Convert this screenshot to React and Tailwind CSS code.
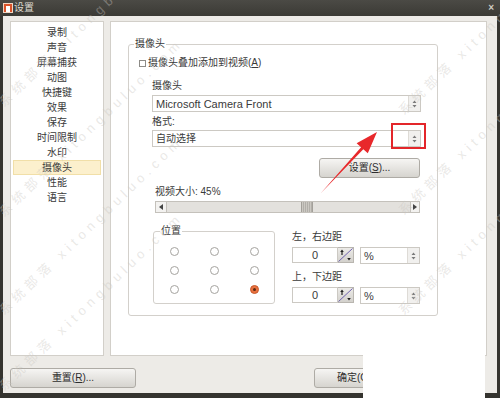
import React from 'react';

const menu = ['录制', '声音', '屏幕捕获', '动图', '快捷键', '效果', '保存', '时间限制', '水印', '摄像头', '性能', '语言'];

function UpDown() {
  return (
    <svg width="5" height="8" viewBox="0 0 5 8">
      <path d="M2.5 0.5L4.5 3H0.5Z M2.5 7.5L4.5 5H0.5Z" fill="#7a7a7a" />
    </svg>
  );
}

function Combo({ text, className }) {
  return (
    <div className={`h-[17px] flex items-stretch border border-[#ccc9c3] bg-white ${className}`}>
      <div className="flex-1 pl-[3px] flex items-center truncate">{text}</div>
      <div className="w-[12px] border-l border-[#dedbd6] bg-[#f1f0ee] flex items-center justify-center">
        <UpDown />
      </div>
    </div>
  );
}

function SpinBox() {
  return (
    <div className="flex h-[16px]">
      <div className="w-[46px] border border-[#ccc9c3] bg-white flex items-center justify-center text-[11px]">0</div>
      <div className="w-[16px] border border-l-0 border-[#b9b6b0] bg-gradient-to-b from-[#ecebe8] to-[#d3d1cc]">
        <svg width="15" height="14" viewBox="0 0 15 14">
          <path d="M0.5 13.5L14.5 0.5" stroke="#7064b0" strokeWidth="1" />
          <path d="M4 1.5L5.8 4H4.6V7H3.4V4H2.2Z" fill="#222" />
          <path d="M11 12.5L12.8 10H9.2Z" fill="#222" />
        </svg>
      </div>
    </div>
  );
}

function Radio({ on }) {
  return on ? (
    <div className="w-[9px] h-[9px] rounded-full bg-[#e9713f] border border-[#c85a2c] flex items-center justify-center">
      <div className="w-[3px] h-[3px] rounded-full bg-[#5a2a14]" />
    </div>
  ) : (
    <div className="w-[9px] h-[9px] rounded-full border border-[#a5a39f] bg-white" />
  );
}

function Button({ children, className }) {
  return (
    <div className={`h-[20px] rounded-[3px] border border-[#aeaba5] bg-gradient-to-b from-[#f6f5f3] to-[#d6d4cf] flex items-center text-[#2e2e2e] ${className}`}>
      {children}
    </div>
  );
}

function Watermark({ className }) {
  return (
    <div className={`absolute origin-bottom-left -rotate-[44deg] whitespace-nowrap text-[13px] tracking-[5px] text-[#c9c6c0]/40 ${className}`}>
      系统部落 xitongbuluo.com
    </div>
  );
}

export default function App() {
  return (
    <div className="relative w-[500px] h-[398px] overflow-hidden bg-[#35342f] text-[10px] leading-[14px] text-[#3a3a3a] font-['Liberation_Sans','Noto_Sans_CJK_SC',sans-serif]">
      {/* title bar */}
      <div className="h-[16px] flex items-center bg-gradient-to-b from-[#4b4a45] to-[#3b3a35] text-[#dedad1]">
        <div className="ml-[3px] w-[10px] h-[10px] bg-[#d9532a] border border-[#f3d6c2] flex items-end justify-center">
          <div className="w-[4px] h-[6px] bg-white" />
        </div>
        <span className="ml-[1px] text-[10px]">设置</span>
        <div className="flex-1" />
        <span className="mr-[6px] text-[10px] font-bold text-[#cfcbc2]">×</span>
      </div>

      {/* body */}
      <div className="mx-[3px] h-[377px] bg-[#edebe7] flex flex-col">
        <div className="flex mt-[5px] h-[335px] pl-[7px] pr-[10px] gap-[6px]">
          {/* left list */}
          <div className="w-[94px] bg-white border border-[#d2cfc9] pt-[3px] px-[2px]">
            {menu.map((m) => (
              <div
                key={m}
                className={`h-[15px] flex items-center justify-center ${m === '摄像头' ? 'bg-[#fcf0cd] border border-[#f1dfa8]' : ''}`}
              >
                {m}
              </div>
            ))}
          </div>

          {/* right panel */}
          <div className="flex-1 bg-white border border-[#d2cfc9] pt-[22px] pl-[17px]">
            <div className="relative w-[310px] h-[272px] border border-[#d3d0cb] rounded-[3px] pt-[11px] pl-[10px]">
              <div className="absolute -top-[8px] left-[5px] bg-white px-[1px]">摄像头</div>

              <div className="h-[14px] flex items-center">
                <div className="w-[7px] h-[7px] border border-[#8d8b87] bg-white" />
                <span className="ml-[2px]">
                  摄像头叠加添加到视频(<span className="underline">A</span>)
                </span>
              </div>

              <div className="ml-[13px] w-[269px]">
                <div className="mt-[9px] h-[14px]">摄像头</div>
                <Combo className="mt-[2px] text-[11px]" text="Microsoft Camera Front" />
                <div className="mt-[3px] h-[14px]">格式:</div>
                <Combo className="mt-[1px]" text="自动选择" />

                <div className="mt-[11px] flex justify-end pr-[1px]">
                  <Button className="w-[101px] h-[19px] justify-center">
                    设置(<span className="underline">S</span>)...
                  </Button>
                </div>

                <div className="mt-[7px] h-[14px] pl-[3px]">视频大小: 45%</div>
                <div className="mt-[2px] ml-[3px] mr-[1px] h-[12px] flex border border-[#c4c1bb] bg-[#e3e1dd]">
                  <div className="w-[11px] border-r border-[#c4c1bb] bg-[#f3f2f0] flex items-center justify-center">
                    <svg width="4" height="6" viewBox="0 0 4 6"><path d="M0 3L4 0V6Z" fill="#444" /></svg>
                  </div>
                  <div className="flex-1 relative">
                    <div className="absolute left-[134px] top-0 bottom-0 w-[12px] border-x border-[#a3a09a] bg-[repeating-linear-gradient(90deg,#cbc8c2_0px,#cbc8c2_1px,#b2afa9_1px,#b2afa9_2px)]" />
                  </div>
                  <div className="w-[9px] border-l border-[#c4c1bb] bg-[#f3f2f0] flex items-center justify-center">
                    <svg width="4" height="6" viewBox="0 0 4 6"><path d="M4 3L0 0V6Z" fill="#444" /></svg>
                  </div>
                </div>

                <div className="mt-[18px] flex">
                  <div className="relative ml-[1px] w-[122px] h-[73px] border border-[#d3d0cb] rounded-[3px] pt-[10px]">
                    <div className="absolute -top-[8px] left-[6px] bg-white px-[1px]">位置</div>
                    <div className="grid grid-cols-3 w-[120px]">
                      {[0, 1, 2, 3, 4, 5, 6, 7, 8].map((i) => (
                        <div key={i} className="h-[19px] flex items-center justify-center">
                          <Radio on={i === 8} />
                        </div>
                      ))}
                    </div>
                  </div>

                  <div className="ml-[17px] w-[128px] -mt-[1px]">
                    <div className="h-[14px]">左，右边距</div>
                    <div className="mt-[3px] flex">
                      <SpinBox />
                      <Combo className="ml-[6px] w-[60px] h-[16px] text-[11px]" text="%" />
                    </div>
                    <div className="mt-[6px] h-[14px]">上，下边距</div>
                    <div className="mt-[3px] flex">
                      <SpinBox />
                      <Combo className="ml-[6px] w-[60px] h-[16px] text-[11px]" text="%" />
                    </div>
                  </div>
                </div>
              </div>
            </div>
          </div>
        </div>

        <div className="mt-[12px] flex pl-[7px]">
          <Button className="w-[126px] justify-center">
            重置(<span className="underline">R</span>)...
          </Button>
          <Button className="ml-[178px] w-[126px] pl-[22px]">确定(O)</Button>
        </div>
      </div>

      {/* white patch covering the bottom-right corner */}
      <div className="absolute left-[363px] top-[355px] w-[122px] h-[43px] bg-white" />

      {/* red annotation */}
      <div className="absolute left-[391px] top-[123px] w-[35px] h-[26px] border-2 border-[#e3262a]" />
      <svg className="absolute left-0 top-0" width="500" height="398" viewBox="0 0 500 398">
        <polygon
          points="321,193 361.1,147.2 356.6,143.3 377,132 367.8,153.2 363.3,149.2"
          fill="#e8282b"
        />
      </svg>

      {/* watermarks */}
      <Watermark className="left-[6px] top-[96px]" />
      <Watermark className="left-[6px] top-[206px]" />
      <Watermark className="left-[6px] top-[304px]" />
      <Watermark className="left-[6px] top-[380px]" />
      <Watermark className="left-[406px] top-[104px]" />
      <Watermark className="left-[406px] top-[204px]" />
      <Watermark className="left-[406px] top-[304px]" />
    </div>
  );
}
